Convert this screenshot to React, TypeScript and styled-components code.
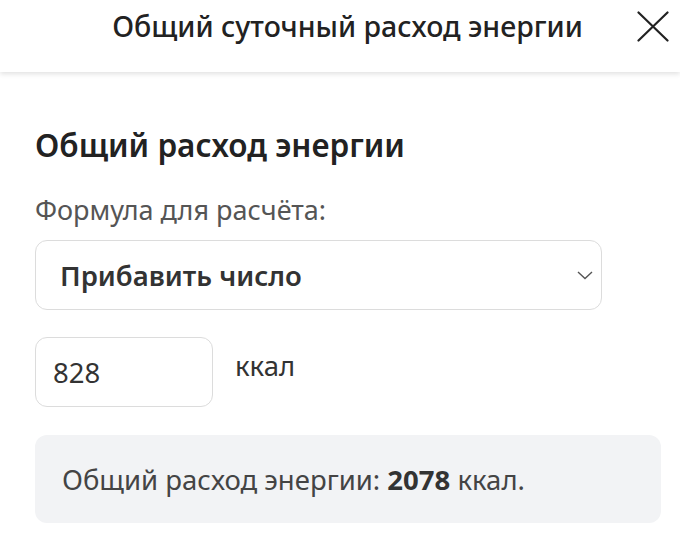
import React from "react";
import styled, { createGlobalStyle } from "styled-components";

const Global = createGlobalStyle`
  html, body { margin: 0; padding: 0; background: #fff; }
  body { font-family: "Noto Sans", "Open Sans", sans-serif; color: #222; }
  * { box-sizing: border-box; }
`;

const Page = styled.div`
  width: 680px;
  min-height: 547px;
  background: #fff;
`;

const Header = styled.header`
  height: 72px;
  display: flex;
  align-items: flex-start;
  box-shadow: 0 2px 5px rgba(0, 0, 0, 0.12);
  padding: 0 11px 0 58px;
`;

const HeaderTitle = styled.h1`
  flex: 1;
  margin: 7px 0 0;
  font-size: 28.5px;
  line-height: 38px;
  font-weight: 500;
  color: #222;
  text-align: center;
  white-space: nowrap;
`;

const CloseButton = styled.button`
  margin-top: 11px;
  width: 32px;
  height: 31px;
  padding: 0;
  border: none;
  background: transparent;
  display: flex;
`;

const Content = styled.main`
  padding: 52px 19px 0 35px;
  display: flex;
  flex-direction: column;
`;

const SectionTitle = styled.h2`
  margin: 0 0 26px;
  font-size: 31.5px;
  font-weight: 600;
  color: #222;
  line-height: 42px;
`;

const Label = styled.div`
  font-size: 27px;
  color: #555;
  line-height: 36px;
  margin-bottom: 12px;
`;

const Select = styled.div`
  width: 567px;
  height: 70px;
  border: 1px solid #dcdcdc;
  border-radius: 12px;
  display: flex;
  align-items: center;
  justify-content: space-between;
  padding: 0 8px 0 24px;
  font-size: 27.5px;
  font-weight: 600;
  color: #333;
`;

const Row = styled.div`
  display: flex;
  align-items: flex-start;
  gap: 22px;
  margin-top: 27px;
`;

const NumberBox = styled.div`
  width: 178px;
  height: 70px;
  border: 1px solid #dcdcdc;
  border-radius: 12px;
  display: flex;
  align-items: center;
  padding-left: 17px;
  font-size: 27.5px;
  color: #333;
`;

const Unit = styled.span`
  font-size: 27.5px;
  color: #333;
  line-height: 36px;
  margin-top: 11px;
`;

const Result = styled.div`
  margin-top: 28px;
  height: 88px;
  background: #f2f3f5;
  border-radius: 12px;
  display: flex;
  align-items: center;
  padding-left: 27px;
  font-size: 27.5px;
  color: #444;
  b { font-weight: 700; color: #333; }
`;

export default function App() {
  return (
    <Page>
      <Global />
      <Header>
        <HeaderTitle>Общий суточный расход энергии</HeaderTitle>
        <CloseButton aria-label="close">
          <svg width="32" height="31" viewBox="0 0 32 31" fill="none" stroke="#222" strokeWidth="2.2" strokeLinecap="round">
            <path d="M1.5 1.5 L30.5 29.5 M30.5 1.5 L1.5 29.5" />
          </svg>
        </CloseButton>
      </Header>
      <Content>
        <SectionTitle>Общий расход энергии</SectionTitle>
        <Label>Формула для расчёта:</Label>
        <Select>
          <span>Прибавить число</span>
          <svg width="16" height="10" viewBox="0 0 16 10" fill="none" stroke="#555" strokeWidth="1.4">
            <path d="M1 2 L8 8.5 L15 2" />
          </svg>
        </Select>
        <Row>
          <NumberBox>828</NumberBox>
          <Unit>ккал</Unit>
        </Row>
        <Result>
          <span>Общий расход энергии: <b>2078</b> ккал.</span>
        </Result>
      </Content>
    </Page>
  );
}
